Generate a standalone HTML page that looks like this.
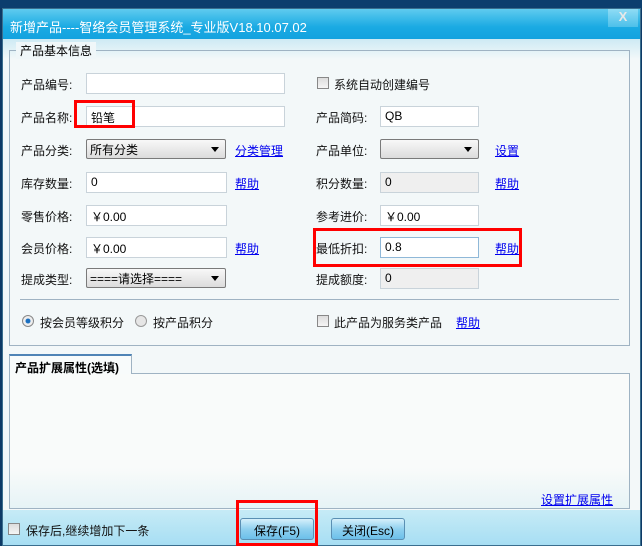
<!DOCTYPE html>
<html><head><meta charset="utf-8"><style>
*{margin:0;padding:0;box-sizing:border-box}
body{width:642px;height:546px;overflow:hidden;background:#0d3a66;font-family:"Liberation Sans","Noto Sans CJK SC",sans-serif;font-size:12px;color:#000;position:relative}
.a{position:absolute}
.win{left:2px;top:8px;width:639px;height:538px;background:#f3f8f9;border:1px solid #3a6e8e}
.title{left:3px;top:9px;width:637px;height:30px;background:linear-gradient(#5fcbef,#1aaae3 60%,#13a2df);color:#fff;font-size:13px;padding:8px 0 0 7px}
.cont{left:3px;top:39px;width:637px;height:470px;background:linear-gradient(#cdeaf4,#f3f8f9 20px)}
.grp{left:9px;top:50px;width:621px;height:296px;border:1px solid #9fb3c3}
.lg{left:16px;top:42px;background:#f0f7f9;padding:0 4px;font-size:12px}
.l{font-size:12px;color:#111}
.in{height:21px;background:#fff;border:1px solid #c9d3da;font-size:12px;padding:2px 0 0 4px}
.dis{background:#efefef}
.sel{height:20px;border:1px solid #7a7a7a;border-radius:2px;background:linear-gradient(#f8f8f8,#dcdcdc);padding:1px 0 0 3px;font-size:12px}
.sel:after{content:"";position:absolute;right:6px;top:7px;border:4px solid transparent;border-top:5px solid #000}
.lk{color:#0000ee;text-decoration:underline;font-size:12px}
.cb{width:12px;height:12px;border:1px solid #888;background:linear-gradient(#ddd,#f5f5f5)}
.red{border:3px solid #f00}
.btn{height:22px;border:1px solid #5a8fb3;border-radius:3px;background:linear-gradient(#d6f0fb,#8fd0ef 50%,#6cc0ea);text-align:center;padding-top:3px;font-size:12px}
</style></head><body>
<div class="a" style="left:0;top:0;width:642px;height:8px;background:#0c3e6e"></div>
<div class="a win"></div>
<div class="a title">新增产品----智络会员管理系统_专业版V18.10.07.02</div>
<div class="a" style="left:608px;top:9px;width:30px;height:18px;background:linear-gradient(#8fdcf5,#4cc0ea);color:#e8e8e8;font-weight:bold;font-size:13px;text-align:center">X</div>
<div class="a cont"></div>
<div class="a grp"></div>
<div class="a lg">产品基本信息</div>

<div class="a l" style="left:21px;top:76px">产品编号:</div>
<div class="a in" style="left:86px;top:73px;width:199px"></div>
<div class="a cb" style="left:317px;top:77px"></div>
<div class="a l" style="left:334px;top:76px">系统自动创建编号</div>

<div class="a l" style="left:21px;top:109px">产品名称:</div>
<div class="a in" style="left:86px;top:106px;width:199px">铅笔</div>
<div class="a red" style="left:74px;top:100px;width:61px;height:28px"></div>
<div class="a l" style="left:316px;top:109px">产品简码:</div>
<div class="a in" style="left:380px;top:106px;width:99px">QB</div>

<div class="a l" style="left:21px;top:142px">产品分类:</div>
<div class="a sel" style="left:86px;top:139px;width:140px">所有分类</div>
<div class="a lk" style="left:235px;top:142px">分类管理</div>
<div class="a l" style="left:316px;top:142px">产品单位:</div>
<div class="a sel" style="left:380px;top:139px;width:99px"></div>
<div class="a lk" style="left:495px;top:142px">设置</div>

<div class="a l" style="left:21px;top:175px">库存数量:</div>
<div class="a in" style="left:86px;top:172px;width:141px">0</div>
<div class="a lk" style="left:235px;top:175px">帮助</div>
<div class="a l" style="left:316px;top:175px">积分数量:</div>
<div class="a in dis" style="left:380px;top:172px;width:99px">0</div>
<div class="a lk" style="left:495px;top:175px">帮助</div>

<div class="a l" style="left:21px;top:208px">零售价格:</div>
<div class="a in" style="left:86px;top:205px;width:141px">￥0.00</div>
<div class="a l" style="left:316px;top:208px">参考进价:</div>
<div class="a in" style="left:380px;top:205px;width:99px">￥0.00</div>

<div class="a l" style="left:21px;top:240px">会员价格:</div>
<div class="a in" style="left:86px;top:237px;width:141px">￥0.00</div>
<div class="a lk" style="left:235px;top:240px">帮助</div>
<div class="a l" style="left:316px;top:240px">最低折扣:</div>
<div class="a in" style="left:380px;top:237px;width:99px;border-color:#8fb8d8">0.8</div>
<div class="a lk" style="left:495px;top:240px">帮助</div>
<div class="a red" style="left:313px;top:228px;width:209px;height:39px"></div>

<div class="a l" style="left:21px;top:271px">提成类型:</div>
<div class="a sel" style="left:86px;top:268px;width:140px">====请选择====</div>
<div class="a l" style="left:316px;top:271px">提成额度:</div>
<div class="a in dis" style="left:380px;top:268px;width:99px">0</div>

<div class="a" style="left:20px;top:299px;width:599px;height:1px;background:#9fb3c3"></div>
<div class="a" style="left:22px;top:315px;width:12px;height:12px;border-radius:50%;border:1px solid #888;background:radial-gradient(#1a6fc0 30%,#eee 40%)"></div>
<div class="a l" style="left:40px;top:314px">按会员等级积分</div>
<div class="a" style="left:135px;top:315px;width:12px;height:12px;border-radius:50%;border:1px solid #999;background:#e6e6e6"></div>
<div class="a l" style="left:153px;top:314px">按产品积分</div>
<div class="a cb" style="left:317px;top:315px"></div>
<div class="a l" style="left:334px;top:314px">此产品为服务类产品</div>
<div class="a lk" style="left:456px;top:314px">帮助</div>

<div class="a" style="left:9px;top:354px;width:123px;height:20px;border:1px solid #9fb3c3;border-top:2px solid #4f84b6;border-bottom:none;background:#f8fbfb;font-weight:bold;font-size:12px;padding:3px 0 0 5px;z-index:2">产品扩展属性(选填)</div>
<div class="a" style="left:9px;top:373px;width:621px;height:136px;border:1px solid #9fb3c3;background:linear-gradient(#f9fbfa 70%,#e6f3f6)"></div>
<div class="a lk" style="left:541px;top:491px">设置扩展属性</div>

<div class="a" style="left:3px;top:510px;width:637px;height:35px;background:linear-gradient(#c6ebf6,#a7def3)"></div>
<div class="a cb" style="left:8px;top:523px"></div>
<div class="a l" style="left:26px;top:522px">保存后,继续增加下一条</div>
<div class="a btn" style="left:240px;top:518px;width:74px">保存(F5)</div>
<div class="a btn" style="left:331px;top:518px;width:74px">关闭(Esc)</div>
<div class="a red" style="left:236px;top:500px;width:82px;height:46px"></div>
</body></html>
